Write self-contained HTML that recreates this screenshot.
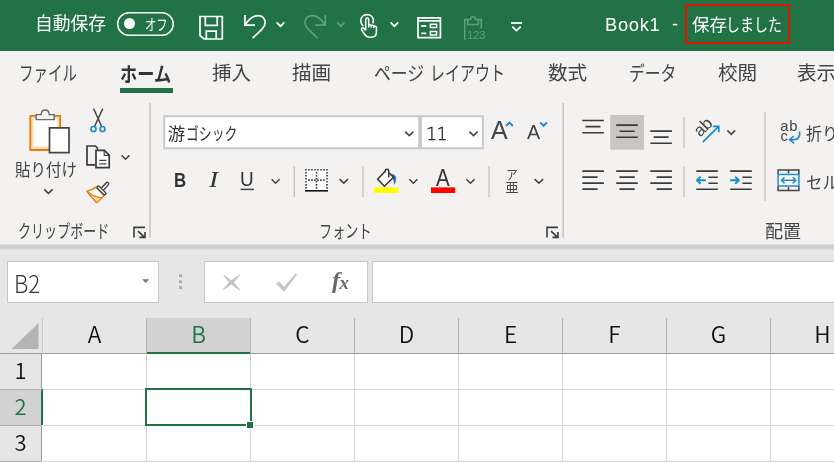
<!DOCTYPE html>
<html lang="ja">
<head>
<meta charset="utf-8">
<title>Book1 - Excel</title>
<style>
*{box-sizing:border-box;margin:0;padding:0}
html,body{width:834px;height:462px;overflow:hidden;background:#f3f2f1}
body{position:relative;will-change:transform;font-family:"Liberation Sans","Noto Sans CJK JP",sans-serif;color:#444;}
.abs{position:absolute}
.t{position:absolute;white-space:nowrap;line-height:1;transform-origin:left top}
#titlebar{left:0;top:0;width:834px;height:51px;background:#217346}
#titlebar .t{color:#fff;font-size:16px}
#tabs .t{font-size:20px;color:#444;top:64px}
#ribbon{left:0;top:97px;width:834px;height:147px;background:#f3f2f1}
#ribbon .t{color:#444}
#shadow{left:0;top:243px;width:834px;height:9px;background:linear-gradient(#f3f2f1 0%,#f3f2f1 8%,#d0cfce 24%,#cfcecd 58%,#dbdbdb 66%,#dddddd 90%,#e6e6e6 100%)}
#fbar{left:0;top:250px;width:834px;height:68px;background:#e6e6e6}
.box{position:absolute;background:#fff;border:1px solid #c6c6c6}
#sheet{left:0;top:318px;width:834px;height:144px;background:#fff}
#colhead{left:0;top:0;width:834px;height:36px;background:#e6e6e6;border-bottom:1px solid #9b9b9b}
#rowhead{left:0;top:36px;width:42px;height:108px;background:#e6e6e6;border-right:1px solid #9b9b9b}
.ch{position:absolute;top:0;height:35px;font-size:22.6px;line-height:32px;text-align:center;color:#111;font-family:"Noto Sans CJK JP","Liberation Sans",sans-serif;font-weight:350}
.rh{position:absolute;left:0;width:41px;font-size:22px;text-align:center;color:#111;font-family:"Noto Sans CJK JP","Liberation Sans",sans-serif;font-weight:350}
.vl{position:absolute;width:1px;background:#d4d4d4}
.hl{position:absolute;height:1px;background:#d4d4d4}
</style>
</head>
<body>

<!-- ================= TITLE BAR ================= -->
<div id="titlebar" class="abs">
  <span class="t" style="left:35px;top:16.2px;font-size:17.8px">自動保存</span>
    <div class="abs" style="left:123.6px;top:18px;width:11px;height:11px;border-radius:5.5px;background:#fff"></div>
  <span class="t" style="left:145px;top:16.6px;font-size:15px;transform:scaleX(.75)">オフ</span>
  <svg class="abs" style="left:0;top:0" width="834" height="51" viewBox="0 0 834 51" fill="none" stroke="#fff" stroke-width="1.7" stroke-linecap="butt" stroke-linejoin="miter">
    <rect x="117.7" y="12.7" width="55.5" height="22.6" rx="11.3" stroke-width="1.5"/>
    <!-- save -->
    <path d="M200 16.5 H222.3 V39 H204 L200 35.5 Z"/>
    <path d="M205.3 16.5 V25.3 H217.2 V16.5"/>
    <path d="M206.3 39 V31.2 H216.2 V39"/>
    <!-- undo -->
    <path d="M244.9 15 V25.2 H255" />
    <path d="M245.3 24.8 C249 18.5 254 15.6 258.3 15.6 C262.6 15.6 265.2 19 265.2 22.6 C265.2 25.6 263.8 27.4 261.8 29.4 L252.6 38.2"/>
    <path d="M276.6 22.4 L280.5 26.2 L284.4 22.4"/>
    <!-- redo (disabled) -->
    <g stroke="#5f9f7d">
      <path d="M325.3 15 V25.2 H315.2" />
      <path d="M324.9 24.8 C321.2 18.5 316.2 15.6 311.9 15.6 C307.6 15.6 305 19 305 22.6 C305 25.6 306.4 27.4 308.4 29.4 L317.6 38.2"/>
      <path d="M337 22.4 L340.7 26.2 L344.4 22.4"/>
    </g>
    <!-- touch -->
    <path d="M363.2 26.2 C361.6 24.8 360.8 22.8 360.8 20.6 C360.8 17 363.6 14.6 367.1 14.6 C370.6 14.6 373.4 17 373.4 20.6 C373.4 21.6 373.2 22.6 372.8 23.4" stroke-width="1.6"/>
    <path d="M365.7 30.5 V19.6 C365.7 17.6 368.7 17.6 368.7 19.6 V25.4 M368.7 27.6 V25.4 C368.7 24.4 371 24.4 371.2 25.6 V27.6 M371.2 25.8 C371.6 24.8 373.6 25 373.8 26.2 V28 M373.8 26.6 C374.4 25.8 376.4 26 376.4 27.6 V32 C376.4 35.2 374.4 37.2 371.6 37.2 H369.6 C367.4 37.2 366 36.2 364.6 34.2 L361.6 29.8 C360.8 28.4 362.6 27.2 363.8 28.4 L365.7 30.5" stroke-width="1.5" stroke-linejoin="round"/>
    <path d="M390.6 22.4 L394.4 26.2 L398.2 22.4"/>
    <!-- form -->
    <path d="M418 17.9 H440.4 V37.6 H418 Z M418 20.9 H440.4"/>
    <path d="M421.2 26 H426.2 M421.2 33.3 H426.2" stroke-width="1.8"/>
    <path d="M430.4 24.2 H436.6 V27.4 H430.4 Z M430.4 31.6 H436.6 V35 H430.4 Z" stroke-width="1.5"/>
    <!-- paste 123 (disabled) -->
    <g stroke="#5f9f7d" stroke-width="1.5">
      <path d="M464.7 39.8 V19.6 H467.6 M478.4 19.6 H481.3 V28.5"/>
      <path d="M467.6 24.4 V19.4 H470.6 C470.6 15.8 475.4 15.8 475.4 19.4 H478.4 V24.4 Z"/>
    </g>
    <!-- customize QAT -->
    <path d="M511 23 H522" stroke-width="1.8"/>
    <path d="M512.3 26.6 L516.5 30.6 L520.7 26.6"/>
  </svg>
  <span class="t" style="left:467px;top:30px;font-size:11.5px;color:#5f9f7d;letter-spacing:-0.4px">123</span>
  <span class="t" style="left:605px;top:16px;font-size:18.3px;letter-spacing:0.7px">Book1</span>
  <span class="t" style="left:672px;top:15px;font-size:18px">-</span>
  <span class="t" style="left:692px;top:16.5px;font-size:17.5px">保存</span>
  <span class="t" style="left:726px;top:16.5px;font-size:17.5px;transform:scaleX(.8)">しました</span>
  <div class="abs" style="left:685px;top:4px;width:105px;height:40px;border:2px solid #e51400"></div>
</div>

<!-- ================= TABS ================= -->
<div id="tabs">
  <span class="t" style="left:19.4px;transform:scaleX(.725)">ファイル</span>
  <span class="t" style="left:119.6px;top:64.6px;font-weight:bold;color:#333;transform:scaleX(.86)">ホーム</span>
  <div class="abs" style="left:120px;top:88px;width:53px;height:5px;background:#217346"></div>
  <span class="t" style="left:212px;top:64.4px;font-size:19.6px">挿入</span>
  <span class="t" style="left:292px;top:64.4px;font-size:19.6px">描画</span>
  <span class="t" style="left:374px;transform:scaleX(.84)">ページ</span>
  <span class="t" style="left:430px;transform:scaleX(.75)">レイアウト</span>
  <span class="t" style="left:548px;top:64.4px;font-size:19.6px">数式</span>
  <span class="t" style="left:629px;transform:scaleX(.79)">データ</span>
  <span class="t" style="left:718px;top:64.4px;font-size:19.6px">校閲</span>
  <span class="t" style="left:797px;top:64.4px;font-size:19.6px">表示</span>
</div>

<!-- ================= RIBBON ================= -->
<div id="ribbon" class="abs">
  <!-- coordinates inside are page coords minus 97 in y: use svg with viewBox offset -->
  <svg class="abs" style="left:0;top:0" width="834" height="147" viewBox="0 97 834 147" fill="none" stroke="#444" stroke-width="1.5">
    <!-- group separators -->
    <path d="M150 103 V237.8 M563.2 103 V237.8" stroke="#c8c6c4" stroke-width="1.6"/>
    <!-- small separators -->
    <path d="M294.3 166 V197 M363 166 V197 M489 166 V197 M684 117 V148 M684 166 V197 M765 112 V201" stroke="#c8c6c4" stroke-width="1.4"/>

    <!-- ===== paste icon ===== -->
    <path d="M30.3 115.8 H60.2 V150 H30.3 Z" fill="#fbdcae" stroke="#e47a10" stroke-width="1.8"/>
    <path d="M33.6 119 H57.4 V146.6 H33.6 Z" fill="#fff" stroke="none"/>
    <path d="M36.2 119.6 V114.6 H41.2 C41.2 108.4 49.2 108.4 49.2 114.6 H54.2 V119.6 Z" fill="#f3f2f1" stroke="#6a6a6a" stroke-width="1.4"/>
    <path d="M49.5 127.8 H69 V152.6 H49.5 Z" fill="#fff" stroke="#444" stroke-width="1.7"/>
    <path d="M44.2 189.4 L48.4 193.4 L52.6 189.4" stroke-width="1.6"/>

    <!-- ===== scissors ===== -->
    <path d="M93.6 108.6 L101.6 126.4 M102.8 108.6 L94.6 126.4" stroke="#444" stroke-width="1.4"/>
    <circle cx="93.5" cy="129" r="2.5" stroke="#1e8bcd" stroke-width="1.7"/>
    <circle cx="102.5" cy="129" r="2.5" stroke="#1e8bcd" stroke-width="1.7"/>

    <!-- ===== copy ===== -->
    <path d="M95.2 164.8 H87 V146 H95.4 L97.4 148 V149.4" stroke="#3b3b3b" stroke-width="1.7"/>
    <path d="M96 150.4 H104.4 L109.2 155.2 V167.6 H96 Z" fill="#fff" stroke="#3b3b3b" stroke-width="1.7"/>
    <path d="M104.2 150.6 V155.4 H109" stroke-width="1.2"/>
    <path d="M99.2 160.4 H106.4 M99.2 163.8 H106.4" stroke-width="1.3"/>
    <path d="M121.6 155.4 L125.5 159.2 L129.4 155.4" stroke-width="1.6"/>

    <!-- ===== format painter ===== -->
    <path d="M95.9 187.1 C92.6 189.6 89.6 190.6 86.8 191.4 L96.6 202.8 L104.2 195.7 Z" fill="#fff" stroke="#e27508" stroke-width="1.4" stroke-linejoin="round"/>
    <path d="M92.6 195.6 L100.6 198.5 L96.7 202 Z" fill="#fbd78c" stroke="none"/>
    <path d="M87.6 191.8 L92.6 195.4 L101.4 198.2" stroke="#e27508" stroke-width="1.2" fill="none"/>
    <path d="M102.9 188.5 L107.3 183.8" stroke="#444" stroke-width="4.2" stroke-linecap="round"/>
    <path d="M98.3 187.3 L104.6 193.4" stroke="#444" stroke-width="4" stroke-linecap="round"/>
    <path d="M103 188.4 L107.2 183.9" stroke="#fff" stroke-width="1.5" stroke-linecap="round"/>
    <path d="M98.5 187.5 L104.4 193.2" stroke="#fff" stroke-width="1.3" stroke-linecap="round"/>

    <!-- dialog launchers -->
    <g stroke="#3b3b3b" stroke-width="1.6">
      <path d="M145 227.4 H134 V237.6"/>
      <path d="M138 231.2 L144.4 237.2 M145 232 V237.4 H139.4"/>
      <path d="M558 227.4 H547 V237.6"/>
      <path d="M551 231.2 L557.4 237.2 M558 232 V237.4 H552.4"/>
    </g>

    <!-- ===== font boxes ===== -->
    <path d="M163.2 115.3 H483.8 V149.2 H163.2 Z" fill="#c8c8c8" stroke="none"/>
    <path d="M165.1 117.2 H418.3 V147.3 H165.1 Z M421.9 117.2 H481.9 V147.3 H421.9 Z" fill="#fff" stroke="none"/>
    <path d="M405.2 131.6 L409.3 135.6 L413.4 131.6" stroke-width="1.5"/>
    <path d="M469.4 131.6 L473.5 135.6 L477.6 131.6" stroke-width="1.5"/>
    <!-- grow/shrink carets -->
    <path d="M506 126 L509.4 122.6 L512.8 126" stroke="#2488d8" stroke-width="2"/>
    <path d="M540.2 122.4 L543.6 125.8 L547 122.4" stroke="#2488d8" stroke-width="2"/>

    <!-- underline of U, chevrons row 2 -->
    <path d="M240.6 189.4 H254" stroke-width="1.5"/>
    <path d="M271.6 179.2 L275.6 183.2 L279.6 179.2" stroke-width="1.6"/>
    <path d="M339.6 179.2 L343.8 183.2 L348 179.2" stroke-width="1.6"/>
    <path d="M409.4 179.2 L413.4 183.2 L417.4 179.2" stroke-width="1.6"/>
    <path d="M466.4 179.2 L470.5 183.2 L474.6 179.2" stroke-width="1.6"/>
    <path d="M534.6 179.2 L538.9 183.2 L543.2 179.2" stroke-width="1.6"/>

    <!-- borders icon -->
    <path d="M305.2 168.9 H327.8 V190 H305.2 Z" fill="#fff" stroke="none"/>
    <g stroke="#3a3a3a" stroke-width="1.6" stroke-dasharray="1.6 1.4">
      <path d="M305.2 169.7 H328 M308.2 180.1 H326"/>
    </g>
    <g stroke="#3a3a3a" stroke-width="1.6" stroke-dasharray="1.6 1.43">
      <path d="M306 171.93 V189.5 M327 171.93 V189.5 M316.5 171.93 V189.5"/>
    </g>
    <path d="M305 190.8 H328" stroke="#111" stroke-width="1.6"/>

    <!-- fill colour -->
    <path d="M374 187.4 H398.2 V193 H374 Z" fill="#ffff00" stroke="none"/>
    <path d="M390.6 175.2 C392.6 173.4 395.8 174.6 395.8 178.6 C395.8 180.8 395.2 182.8 394.4 184.4 C394.2 181.8 393.8 179.6 392.4 177.6 Z" fill="#1c6ec2" stroke="#1c6ec2" stroke-width=".5"/>
    <path d="M388.7 172.6 L393.5 177.2 L384.4 186.2 L377.7 179.2 L385.2 171.3" fill="#fff" stroke="#383838" stroke-width="1.6" stroke-linejoin="miter"/>
    <path d="M385.2 172.2 V171 C385.2 168.7 388.7 168.7 388.7 171 V177.4" stroke="#383838" stroke-width="1.5" fill="none"/>
    <!-- font colour -->
    <path d="M431 187.4 H455.2 V193 H431 Z" fill="#ff0000" stroke="none"/>

    <!-- ===== alignment ===== -->
    <path d="M610.2 115 H644 V149.8 H610.2 Z" fill="#c8c6c4" stroke="none"/>
    <g stroke="#3b3b3b" stroke-width="1.6">
      <path d="M582.3 120.5 H603.9 M585.5 126.6 H600.5 M582.3 132.7 H603.9"/>
      <path d="M616.2 125.1 H637.8 M619.5 131.2 H634.7 M616.2 137.3 H637.8"/>
      <path d="M650.3 131.1 H671.9 M653.6 137.1 H668.6 M650.3 143.2 H671.9"/>
      <!-- left -->
      <path d="M582.3 171.1 H603.9 M582.3 177.1 H597.6 M582.3 183.1 H603.9 M582.3 189.1 H597.6"/>
      <!-- center -->
      <path d="M616.2 171.1 H637.8 M619.5 177.1 H634.7 M616.2 183.1 H637.8 M619.5 189.1 H634.7"/>
      <!-- right -->
      <path d="M650.3 171.1 H671.9 M656.6 177.1 H671.9 M650.3 183.1 H671.9 M656.6 189.1 H671.9"/>
      <!-- decrease indent -->
      <path d="M696.3 171.1 H717.8 M708.4 177.2 H717.8 M708.4 183.2 H717.8 M696.3 189.2 H717.8"/>
      <!-- increase indent -->
      <path d="M730.2 171.1 H751.8 M742.4 177.2 H751.8 M742.4 183.2 H751.8 M730.2 189.2 H751.8"/>
    </g>
    <g stroke="#1e8bcd" stroke-width="1.5">
      <path d="M697.4 180.2 H705.8 M700.6 176.6 L697 180.2 L700.6 183.8" stroke-width="2"/>
      <path d="M730.2 180.2 H738.4 M735.2 176.6 L738.8 180.2 L735.2 183.8" stroke-width="2"/>
      <!-- orientation arrow -->
      <path d="M702.8 142.2 L718.4 126.6 M712.8 126.4 H718.8 V132.2" stroke-width="1.7"/>
      <!-- wrap arrow -->
      <path d="M799.5 131.4 C800.6 136 798 139.6 794.4 139.6 H789.6 M793.6 136 L789.5 139.6 L794.2 143.3" stroke-width="1.6"/>
      <!-- merge arrows -->
      <path d="M778.1 174.5 H798.9 V186.1 H778.1 Z" fill="#fff" stroke-width="1.5"/>
      <path d="M781.4 180.3 H795.8 M784.6 177.2 L781.3 180.3 L784.6 183.4 M792.6 177.2 L795.9 180.3 L792.6 183.4" stroke-width="1.5"/>
    </g>
    <path d="M727.4 130.4 L731.3 134.3 L735.2 130.4" stroke-width="1.6"/>
    <!-- merge icon frame -->
    <path d="M778.1 174 V170 H798.9 V174 M778.1 186.6 V190.4 H798.9 V186.6 M788.5 170 V173.6 M788.5 187 V190.4" stroke="#444" stroke-width="1.5"/>
  </svg>

  <!-- ===== text ===== -->
  <span class="t" style="left:15px;top:64.5px;font-size:17.2px;transform:scaleX(.9)">貼り付け</span>
  <span class="t" style="left:17.6px;top:125.7px;font-size:18.5px;transform:scaleX(.705)">クリップボード</span>
  <span class="t" style="left:167.8px;top:29px;font-size:17.4px;color:#333">游</span>
  <span class="t" style="left:186px;top:29px;font-size:17.4px;color:#333;transform:scaleX(.74)">ゴシック</span>
  <span class="t" style="left:426px;top:28.5px;font-size:17.5px;color:#222;letter-spacing:-0.6px;font-family:'DejaVu Sans',sans-serif;font-weight:200;-webkit-text-stroke:0.35px #222">11</span>
  <span class="t" style="left:490.5px;top:19.5px;font-size:26px;transform:scaleX(.96)">A</span>
  <span class="t" style="left:527px;top:24.6px;font-size:20.5px;transform:scaleX(.96)">A</span>
  <span class="t" style="left:174.2px;top:72.4px;font-size:21px;font-weight:bold;color:#333;transform:scaleX(.8)">B</span>
  <span class="t" style="left:208.6px;top:71px;font-size:23px;font-style:italic;font-family:'Liberation Serif',serif;color:#333;transform:scaleX(1.2)">I</span>
  <span class="t" style="left:240.3px;top:71.8px;font-size:20.6px;color:#333;transform:scaleX(.92)">U</span>
  <span class="t" style="left:436.4px;top:70px;font-size:23.3px;color:#333;transform:scaleX(.88)">A</span>
  <span class="t" style="left:506px;top:70.5px;font-size:13px;transform:scaleX(.9)">ア</span>
  <span class="t" style="left:505.5px;top:84px;font-size:13px">亜</span>
  <span class="t" style="left:319px;top:125.7px;font-size:18.5px;transform:scaleX(.71)">フォント</span>
  <span class="t" style="left:765px;top:126.4px;font-size:18px">配置</span>
  <!-- orientation ab -->
  <span class="t" style="left:702.6px;top:30.3px;font-size:17px;transform:translate(-50%,-50%) rotate(-45deg);transform-origin:center">ab</span>
  <!-- wrap -->
  <span class="t" style="left:780.3px;top:22px;font-size:14.8px;letter-spacing:.7px">ab</span>
  <span class="t" style="left:780.6px;top:32.2px;font-size:14.8px">c</span>
  <span class="t" style="left:806px;top:29px;font-size:16.5px;transform:scaleX(.97)">折り返</span>
  <span class="t" style="left:805.5px;top:77.5px;font-size:17px;transform:scaleX(.97)">セルを</span>
</div>

<div id="shadow" class="abs"></div>

<!-- ================= FORMULA BAR ================= -->
<div id="fbar" class="abs">
  <div class="box" style="left:7px;top:11px;width:152px;height:42px"></div>
  <span class="t" style="left:14px;top:21.2px;font-size:24.4px;color:#333;font-family:'Noto Sans CJK JP',sans-serif;font-weight:300;transform:scaleX(.915)">B2</span>
  <div class="box" style="left:204px;top:11px;width:164px;height:42px"></div>
  <div class="box" style="left:372px;top:11px;width:470px;height:42px"></div>
  <svg class="abs" style="left:0;top:0" width="834" height="68" viewBox="0 250 834 68" fill="none">
    <path d="M142.2 279.2 H149.2 L145.7 283 Z" fill="#777"/>
    <path d="M179 274.3 h3 v3 h-3 Z M179 280.2 h3 v3 h-3 Z M179 286.1 h3 v3 h-3 Z" fill="#adadad"/>
    <path d="M223.6 275.2 Q233.6 280.7 240 290.2 Q230 284.7 223.6 275.2 Z M240 274.8 Q233.4 284.2 223.2 289.6 Q229.8 280.2 240 274.8 Z" fill="#c2c2c2" stroke="#c2c2c2" stroke-width=".7" stroke-linejoin="round"/>
    <path d="M276.2 283.8 L278.6 281.6 L284.3 286.8 L295.6 273.8 L296.8 274.6 L284.2 291.6 Z" fill="#c6c6c6" stroke="#c6c6c6" stroke-width=".5" stroke-linejoin="round"/>
  </svg>
  <span class="t" style="left:332px;top:18px;font-size:24px;font-style:italic;font-weight:bold;font-family:'Liberation Serif',serif;color:#6a6a6a;letter-spacing:-0.3px">f</span>
  <span class="t" style="left:339.5px;top:23px;font-size:19px;font-style:italic;font-weight:bold;font-family:'Liberation Serif',serif;color:#6a6a6a">x</span>
</div>

<!-- ================= SHEET ================= -->
<div id="sheet" class="abs">
  <div id="colhead" class="abs"></div>
  <div id="rowhead" class="abs"></div>
  <!-- selected headers -->
  <div class="abs" style="left:146px;top:0;width:105px;height:35px;background:#d2d2d2"></div>
  <div class="abs" style="left:146px;top:34px;width:105px;height:2px;background:#217346"></div>
  <div class="abs" style="left:0;top:71px;width:42px;height:36px;background:#d2d2d2"></div>
  <div class="abs" style="left:41px;top:71px;width:2px;height:36px;background:#217346"></div>
  <!-- select-all triangle -->
  <svg class="abs" style="left:0;top:0" width="42" height="36"><path d="M38.5 5 V31 H11.5 Z" fill="#b4b4b4"/></svg>
  <!-- header separators -->
  <div class="vl" style="left:42px;top:0;height:36px;background:#c9c9c9"></div>
  <div class="vl" style="left:146px;top:0;height:36px;background:#b0b0b0"></div>
  <div class="vl" style="left:250px;top:0;height:36px;background:#b0b0b0"></div>
  <div class="vl" style="left:354px;top:0;height:36px;background:#b0b0b0"></div>
  <div class="vl" style="left:458px;top:0;height:36px;background:#b0b0b0"></div>
  <div class="vl" style="left:562px;top:0;height:36px;background:#b0b0b0"></div>
  <div class="vl" style="left:666px;top:0;height:36px;background:#b0b0b0"></div>
  <div class="vl" style="left:770px;top:0;height:36px;background:#b0b0b0"></div>
  <div class="hl" style="left:0;top:71px;width:42px;background:#b0b0b0"></div>
  <div class="hl" style="left:0;top:107px;width:42px;background:#b0b0b0"></div>
  <div class="hl" style="left:0;top:143px;width:42px;background:#b0b0b0"></div>
  <!-- gridlines -->
  <div class="vl" style="left:146px;top:36px;height:108px"></div>
  <div class="vl" style="left:250px;top:36px;height:108px"></div>
  <div class="vl" style="left:354px;top:36px;height:108px"></div>
  <div class="vl" style="left:458px;top:36px;height:108px"></div>
  <div class="vl" style="left:562px;top:36px;height:108px"></div>
  <div class="vl" style="left:666px;top:36px;height:108px"></div>
  <div class="vl" style="left:770px;top:36px;height:108px"></div>
  <div class="hl" style="left:43px;top:71px;width:791px"></div>
  <div class="hl" style="left:43px;top:107px;width:791px"></div>
  <div class="hl" style="left:43px;top:143px;width:791px"></div>
  <!-- column letters -->
  <div class="ch" style="left:43px;width:103px">A</div>
  <div class="ch" style="left:147px;width:103px;color:#217346">B</div>
  <div class="ch" style="left:251px;width:103px">C</div>
  <div class="ch" style="left:355px;width:103px">D</div>
  <div class="ch" style="left:459px;width:103px">E</div>
  <div class="ch" style="left:563px;width:103px">F</div>
  <div class="ch" style="left:667px;width:103px">G</div>
  <div class="ch" style="left:771px;width:103px">H</div>
  <!-- row numbers -->
  <div class="rh" style="top:36px;height:35px;line-height:31px">1</div>
  <div class="rh" style="top:72px;height:35px;line-height:31px;color:#217346">2</div>
  <div class="rh" style="top:108px;height:35px;line-height:31px">3</div>
  <!-- active cell -->
  <div class="abs" style="left:145px;top:70px;width:107px;height:38px;border:2px solid #217346"></div>
  <div class="abs" style="left:246px;top:103px;width:8px;height:8px;background:#217346;border:1px solid #fff"></div>
</div>

</body>
</html>
